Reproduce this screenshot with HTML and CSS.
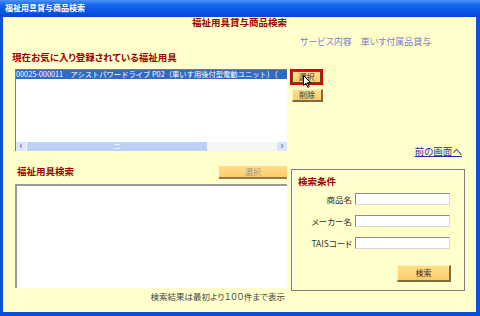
FILE: index.html
```html
<!DOCTYPE html>
<html>
<head>
  <meta charset="utf-8">
  <title>福祉用具貸与商品検索</title>
  <link rel="stylesheet" href="styles.css">
</head>
<body>
  <div class="window">
    <div class="titlebar">福祉用具貸与商品検索</div>
    <div class="content">
      <h1 class="page-title">福祉用具貸与商品検索</h1>
      <p class="service">サービス内容　車いす付属品貸与</p>
      <h2 class="section-title fav-title">現在お気に入り登録されている福祉用具</h2>

      <!-- favourites -->
      <div class="fav-row">
        <div class="listbox fav-list">
          <div class="list-item selected">00025-000011　アシストパワードライブ P02（車いす用後付型電動ユニット）（</div>
          <div class="hscroll">
            <span class="sb-arrow">&lsaquo;</span>
            <span class="sb-thumb"><i></i></span>
            <span class="sb-track"></span>
            <span class="sb-arrow">&rsaquo;</span>
          </div>
        </div>
        <div class="fav-side">
          <span class="focus-ring"><button class="btn btn-small">選択</button></span>
          <button class="btn btn-small btn-delete">削除</button>
          <a class="back-link" href="#">前の画面へ</a>
        </div>
      </div>

      <!-- search -->
      <div class="search-area">
        <div class="results-col">
          <div class="results-head">
            <h2 class="section-title">福祉用具検索</h2>
            <button class="btn btn-wide" disabled>選択</button>
          </div>
          <div class="listbox results-list"></div>
          <p class="note">検索結果は最初より１００件まで表示</p>
        </div>
        <div class="criteria">
          <h3 class="section-title">検索条件</h3>
          <div class="fields">
            <label>商品名</label><input type="text">
            <label>メーカー名</label><input type="text">
            <label>TAISコード</label><input type="text">
          </div>
          <div class="search-btn-row">
            <button class="btn btn-search">検索</button>
          </div>
        </div>
      </div>

      <svg class="cursor" width="8" height="13" viewBox="0 0 8 13">
        <path d="M0.5 0.5 L0.5 10.5 L3 8.2 L4.8 12.3 L6.2 11.7 L4.4 7.7 L7.5 7.7 Z" fill="#fff" stroke="#000" stroke-width="1"/>
      </svg>
    </div>
  </div>
</body>
</html>
```

FILE: styles.css
```css
body {
  margin: 0;
  font-family: "Noto Sans CJK JP", "Liberation Sans", sans-serif;
  font-feature-settings: "palt";
}
.window {
  width: 480px;
  height: 316px;
  background-color: #0b4fdb;
}
.titlebar {
  height: 17px;
  line-height: 16px;
  padding-left: 5px;
  background: linear-gradient(#4a92f8, #1764ec 30%, #0657e4 65%, #0448cf);
  color: #fff;
  font-size: 8px;
  font-weight: bold;
}
.content {
  position: relative;
  height: 295px;
  margin: 0 4px 4px 3px;
  background-color: #ffffcc;
}
.page-title {
  margin: 0;
  line-height: 11px;
  font-size: 9.5px;
  text-align: center;
  color: #a00000;
}
.service {
  margin: 8px 0 0 297px;
  line-height: 11px;
  font-size: 9px;
  color: #7f7fd0;
}
.section-title {
  margin: 0;
  line-height: 11px;
  font-size: 9.5px;
  font-weight: bold;
  color: #a00000;
}
.fav-title {
  margin: 5px 0 0 9px;
}

/* list boxes */
.listbox {
  box-sizing: border-box;
  background-color: #fff;
  border-style: solid;
  border-width: 2px 0 0 2px;
  border-color: #9a9a9a #e0e0e0 #e0e0e0 #9a9a9a;
}
.fav-row {
  display: grid;
  grid-template-columns: 272px 1fr;
  column-gap: 3px;
  margin: 6px 14px 0 12px;
  align-items: start;
}
.fav-list {
  display: flex;
  flex-direction: column;
  height: 82px;
  border-width: 1px 0 0 1px;
  border-color: #7a7a7a;
}
.list-item {
  line-height: 9px;
  font-size: 7.3px;
  white-space: nowrap;
  font-feature-settings: normal;
}
.selected {
  background-color: #316ac5;
  color: #fff;
}
.hscroll {
  display: flex;
  height: 9px;
  margin-top: auto;
  background-color: #f6f6f3;
}
.sb-arrow {
  width: 10px;
  line-height: 8px;
  font-size: 9px;
  font-weight: bold;
  text-align: center;
  color: #4d6185;
  background-color: #dbe5fb;
}
.sb-thumb {
  display: flex;
  align-items: center;
  justify-content: center;
  width: 180px;
  margin-left: 1px;
  background-color: #bcd0f9;
  border-radius: 1px;
}
.sb-thumb i {
  width: 6px;
  height: 3px;
  border-top: 1px solid #e6eeff;
  border-bottom: 1px solid #e6eeff;
}
.sb-track {
  flex: 1;
}

/* buttons */
.btn {
  box-sizing: border-box;
  padding: 0;
  font-family: inherit;
  font-size: 8px;
  line-height: 1;
  color: #333;
  background: linear-gradient(#ffdf8c, #ffcc66);
  border-style: solid;
  border-width: 1px 2px 2px 1px;
  border-color: #fff0c4 #7e6b44 #7e6b44 #fff0c4;
}
.fav-side {
  display: flex;
  flex-direction: column;
  align-items: flex-start;
  height: 87px;
}
.focus-ring {
  display: block;
  border: 2px solid #e00000;
  line-height: 0;
}
.btn-small {
  width: 29px;
  height: 12px;
}
.focus-ring .btn-small {
  border-color: #5e4e2a;
  border-width: 1px;
}
.btn-delete {
  width: 31px;
  height: 13px;
  margin: 4px 0 0 2px;
}
.back-link {
  margin-top: auto;
  align-self: flex-end;
  line-height: 10px;
  font-size: 9.5px;
  color: #2b2ba8;
}

/* search */
.search-area {
  display: grid;
  grid-template-columns: 272px 174px;
  column-gap: 4px;
  margin: 10px 11px 0 12px;
}
.results-head {
  display: flex;
  justify-content: space-between;
  align-items: center;
  height: 13px;
}
.results-head .section-title {
  margin: -3px 0 0 2px;
}
.btn-wide {
  width: 68px;
  height: 13px;
  color: #a09a90;
  border-width: 0 0 2px 0;
  border-color: #8d7c55;
}
.results-list {
  height: 104px;
  margin-top: 5px;
}
.note {
  margin: 3px 2px 0 0;
  line-height: 10px;
  font-size: 8.5px;
  text-align: right;
  color: #444;
}
.criteria {
  box-sizing: border-box;
  height: 122px;
  margin-top: 3px;
  padding: 5px 0 0 6px;
  border: 1px solid #7d7d7d;
  box-shadow: inset 1px 1px 0 #fff;
}
.criteria .section-title {
  line-height: 12px;
}
.fields {
  display: grid;
  grid-template-columns: 54px 95px;
  column-gap: 3px;
  row-gap: 10px;
  margin-top: 6px;
  align-items: center;
}
.fields label {
  text-align: right;
  font-size: 8.5px;
  line-height: 10px;
  color: #333;
}
.fields input {
  box-sizing: border-box;
  width: 95px;
  height: 12px;
  margin: 0;
  padding: 0;
  background-color: #fff;
  border-style: solid;
  border-width: 1px;
  border-color: #8a8a8a #d8d8d8 #d8d8d8 #8a8a8a;
}
.search-btn-row {
  display: flex;
  justify-content: flex-end;
  margin: 16px 13px 0 0;
}
.btn-search {
  width: 54px;
  height: 17px;
}
.cursor {
  position: absolute;
  left: 300px;
  top: 58px;
}
```
